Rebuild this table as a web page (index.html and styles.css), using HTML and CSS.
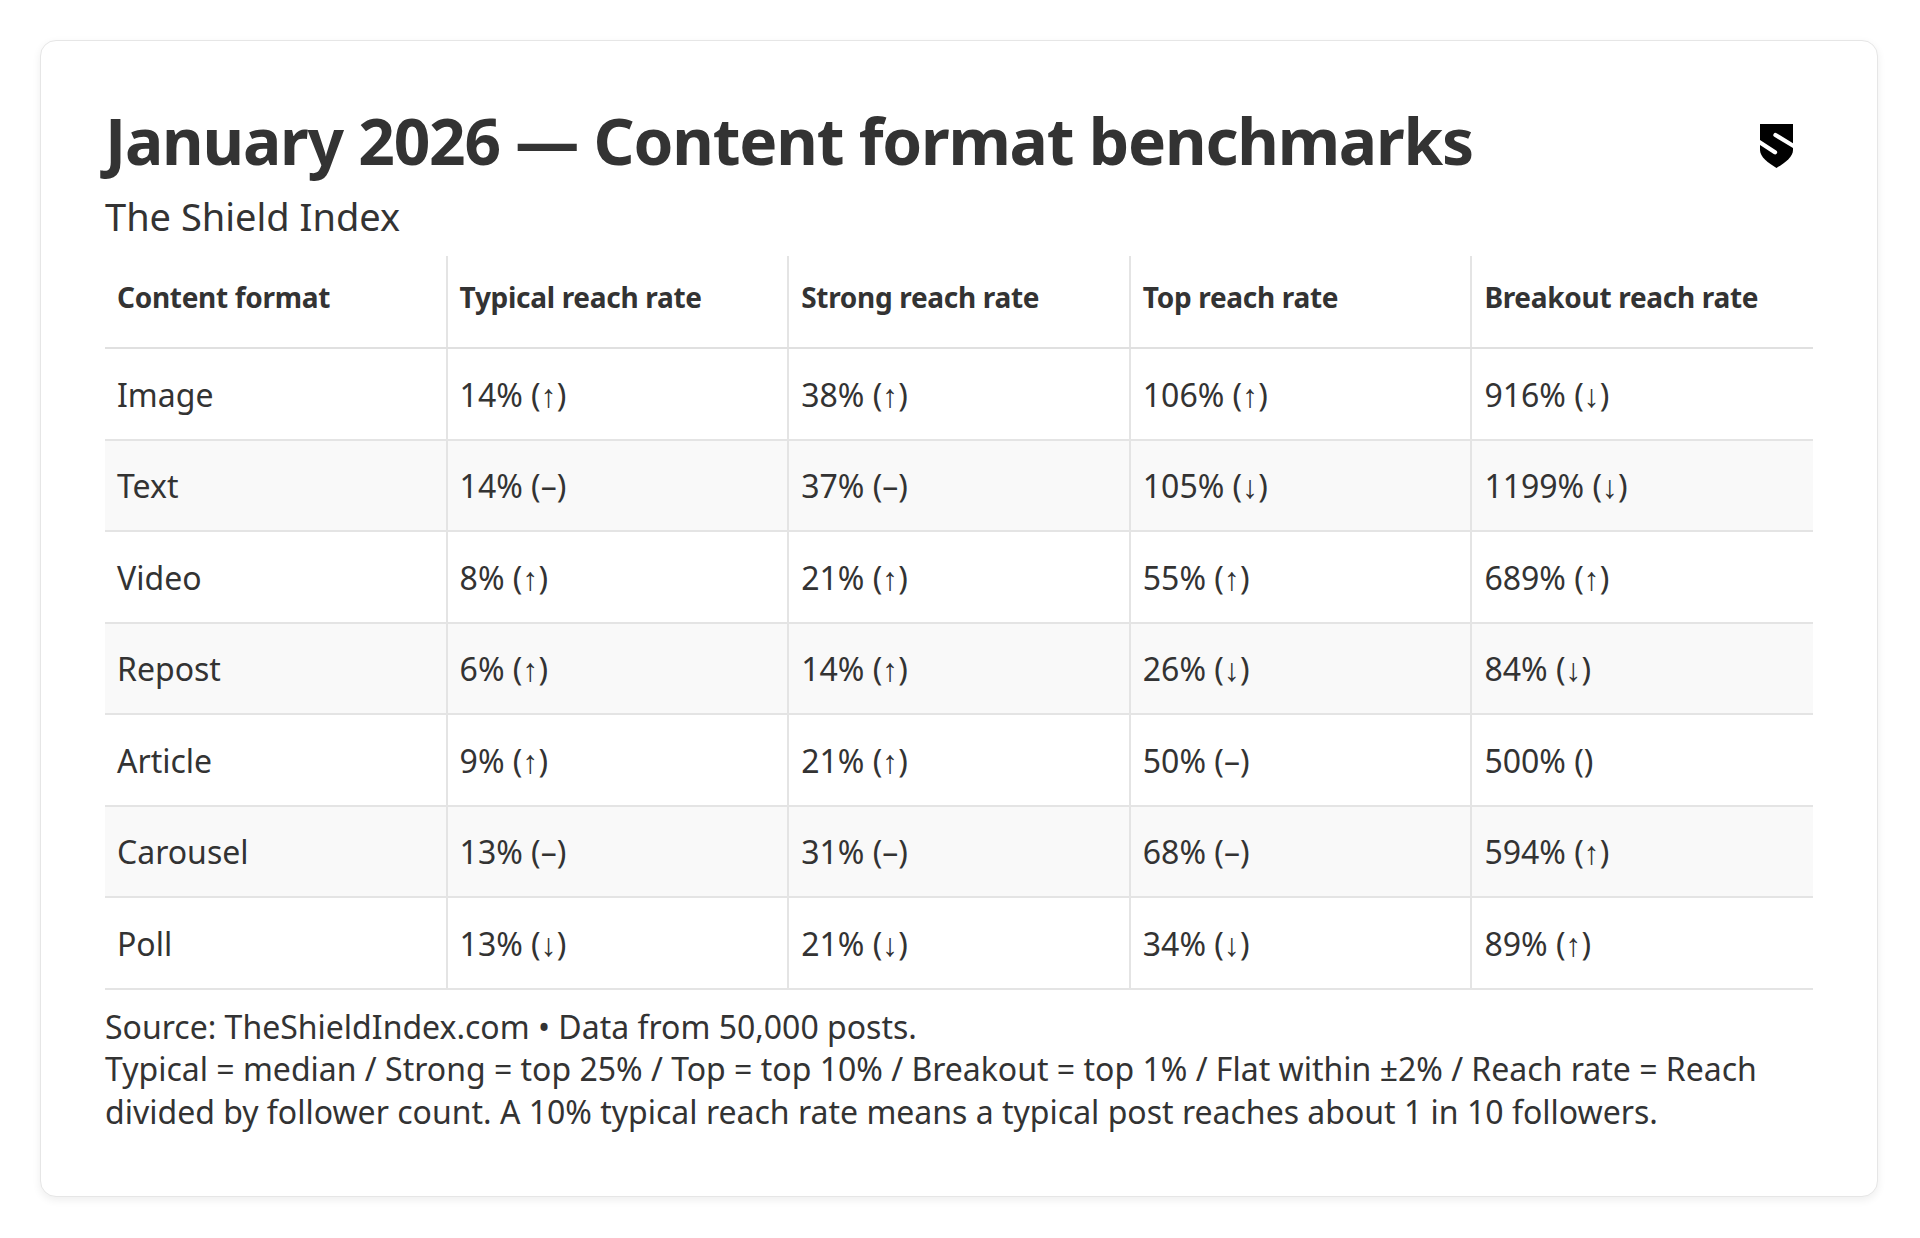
FILE: index.html
```html
<!DOCTYPE html>
<html lang="en">
<head>
<meta charset="utf-8">
<title>January 2026 — Content format benchmarks</title>
<link rel="stylesheet" href="styles.css">
</head>
<body>
<div class="card">
  <div class="head">
    <div class="titles">
      <h1 class="title">January 2026 — Content format benchmarks</h1>
      <div class="subtitle">The Shield Index</div>
    </div>
    <svg class="logo" viewBox="0 0 32 44" width="33" height="44" preserveAspectRatio="none" aria-hidden="true">
      <path d="M0 0H32V26C32 33 24 39 16 44C8 39 0 33 0 26Z" fill="#000"/>
      <path d="M-3 16.5L14.5 28.3" stroke="#fff" stroke-width="4.2" stroke-linecap="round"/>
      <path d="M15 11L35 23.5" stroke="#fff" stroke-width="4.2" stroke-linecap="round"/>
    </svg>
  </div>
  <table class="bench">
    <thead>
      <tr>
        <th>Content format</th>
        <th>Typical reach rate</th>
        <th>Strong reach rate</th>
        <th>Top reach rate</th>
        <th>Breakout reach rate</th>
      </tr>
    </thead>
    <tbody>
      <tr><td>Image</td><td>14% (↑)</td><td>38% (↑)</td><td>106% (↑)</td><td>916% (↓)</td></tr>
      <tr><td>Text</td><td>14% (–)</td><td>37% (–)</td><td>105% (↓)</td><td>1199% (↓)</td></tr>
      <tr><td>Video</td><td>8% (↑)</td><td>21% (↑)</td><td>55% (↑)</td><td>689% (↑)</td></tr>
      <tr><td>Repost</td><td>6% (↑)</td><td>14% (↑)</td><td>26% (↓)</td><td>84% (↓)</td></tr>
      <tr><td>Article</td><td>9% (↑)</td><td>21% (↑)</td><td>50% (–)</td><td>500% ()</td></tr>
      <tr><td>Carousel</td><td>13% (–)</td><td>31% (–)</td><td>68% (–)</td><td>594% (↑)</td></tr>
      <tr><td>Poll</td><td>13% (↓)</td><td>21% (↓)</td><td>34% (↓)</td><td>89% (↑)</td></tr>
    </tbody>
  </table>
  <p class="note">Source: TheShieldIndex.com • Data from 50,000 posts.<br>Typical = median / Strong = top 25% / Top = top 10% / Breakout = top 1% / Flat within ±2% / Reach rate = Reach divided by follower count. A 10% typical reach rate means a typical post reaches about 1 in 10 followers.</p>
</div>
</body>
</html>
```
FILE: styles.css
```css
html, body {
  margin: 0;
  padding: 0;
  background: #ffffff;
}
body {
  font-family: "Noto Sans", "Open Sans", sans-serif;
  color: #333333;
  padding: 40px 42px 41px 40px;
}
.card {
  width: 1838px;
  box-sizing: border-box;
  border: 1px solid #e6e6e6;
  border-radius: 16px;
  background: #ffffff;
  box-shadow: 0 3px 8px rgba(0, 0, 0, 0.07);
  padding: 62px 64px 63px 64px;
}
.head {
  display: flex;
  justify-content: space-between;
  align-items: flex-start;
}
.title {
  margin: 0;
  font-size: 64px;
  line-height: 1.2;
  font-weight: 700;
  letter-spacing: -1.2px;
  color: #333333;
}
.subtitle {
  margin-top: 14px;
  font-size: 38px;
  line-height: 1.2;
  color: #333333;
}
.logo {
  display: block;
  margin-top: 21px;
  margin-right: 20px;
}
.bench {
  width: 100%;
  margin-top: 17px;
  border-collapse: collapse;
  table-layout: fixed;
}
.bench th,
.bench td {
  text-align: left;
  padding: 0 12px;
  vertical-align: middle;
}
.bench th + th,
.bench td + td {
  border-left: 2px solid #e4e4e4;
}
.bench th {
  height: 92px;
  padding-bottom: 9px;
  box-sizing: border-box;
  font-size: 28px;
  letter-spacing: -0.3px;
  font-weight: 700;
  color: #333333;
  border-bottom: 2px solid #e0e0e0;
}
.bench td {
  height: 89.5px;
  font-size: 32px;
  color: #333333;
  border-bottom: 2px solid #e4e4e4;
}
.bench tbody tr:nth-child(even) td {
  background: #f9f9f9;
}
.note {
  margin: 16px 0 0 0;
  font-size: 32px;
  line-height: 42.5px;
  color: #333333;
}
```
